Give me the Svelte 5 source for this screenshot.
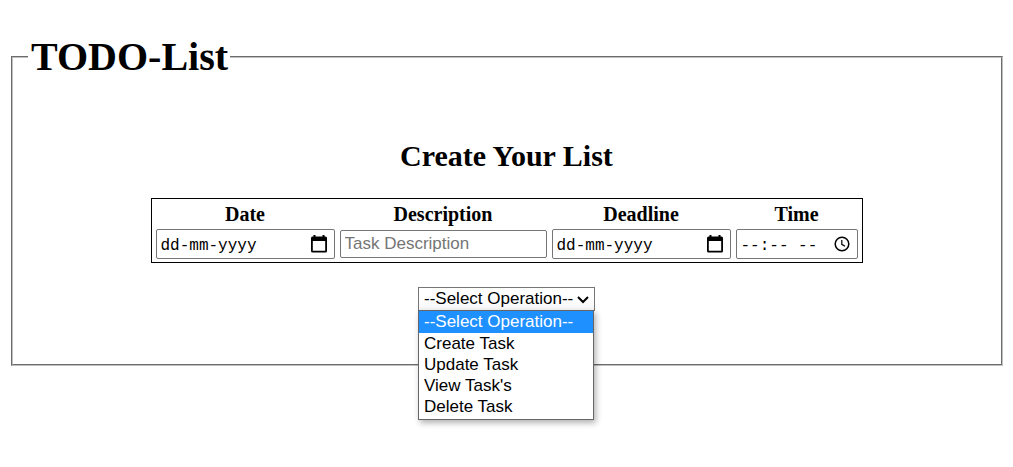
<script>
  const operations = ['--Select Operation--', 'Create Task', 'Update Task', "View Task's", 'Delete Task'];
  let operation = $state(operations[0]);
  let open = $state(true);

  function choose(name) {
    operation = name;
    open = false;
  }
</script>

{#snippet calendar()}
  <svg width="16" height="18" viewBox="0 0 16 18" aria-hidden="true">
    <path fill="#000" fill-rule="evenodd" d="M2.500 0h2v1.500h7V0h2v1.500h1a1.500 1.500 0 0 1 1.500 1.500v13a1.500 1.500 0 0 1-1.500 1.500h-13A1.500 1.500 0 0 1 0 16v-13A1.500 1.500 0 0 1 1.500 1.500h1zM1.800 6V15.700h12.400V6z" />
  </svg>
{/snippet}

<main>
  <fieldset class="todo">
    <legend><h1>TODO-List</h1></legend>
    <h2>Create Your List</h2>
    <table>
      <thead>
        <tr>
          <th id="date">Date</th>
          <th id="description">Description</th>
          <th id="deadline">Deadline</th>
          <th id="time">Time</th>
        </tr>
      </thead>
      <tbody>
        <tr>
          <td>
            <div class="field date">
              <input type="text" aria-labelledby="date" placeholder="dd-mm-yyyy" />
              <button type="button" aria-labelledby="date">{@render calendar()}</button>
            </div>
          </td>
          <td>
            <div class="field task">
              <input type="text" aria-labelledby="description" placeholder="Task Description" />
            </div>
          </td>
          <td>
            <div class="field date">
              <input type="text" aria-labelledby="deadline" placeholder="dd-mm-yyyy" />
              <button type="button" aria-labelledby="deadline">{@render calendar()}</button>
            </div>
          </td>
          <td>
            <div class="field time">
              <input type="text" aria-labelledby="time" placeholder="--:-- --" />
              <button type="button" aria-labelledby="time">
                <svg width="16" height="16" viewBox="0 0 16 16" fill="none" stroke="#000" aria-hidden="true">
                  <circle cx="8" cy="8" r="6.800" stroke-width="1.500" />
                  <path d="M7.800 4v4.300l3.200 2" stroke-width="1.200" />
                </svg>
              </button>
            </div>
          </td>
        </tr>
      </tbody>
    </table>

    <div class="operation">
      <select aria-label="Operation" bind:value={operation}>
        {#each operations as name}
          <option value={name}>{name}</option>
        {/each}
      </select>
      <svg class="chevron" width="12" height="8" viewBox="0 0 12 8" fill="none" stroke="#000" stroke-width="2" aria-hidden="true">
        <path d="M1 1l5 5 5-5" />
      </svg>
      {#if open}
        <ul>
          {#each operations as name}
            <li>
              <button type="button" class:active={name === operation} onclick={() => choose(name)}>{name}</button>
            </li>
          {/each}
        </ul>
      {/if}
    </div>
  </fieldset>
</main>

<style>
  :global(body) {
    background: #fff;
  }
  main {
    box-sizing: border-box;
    min-height: 100vh;
    padding: 34px 10px 10px 11px;
    font-family: "Liberation Serif", "Times New Roman", serif;
    font-size: 20px;
    color: #000;
  }
  .todo {
    display: flex;
    flex-direction: column;
    align-items: center;
    min-width: 0;
    margin: 0;
    padding: 59px 16px 53px 15px;
    border: 2px groove #c0c0c0;
  }
  legend {
    padding: 0 2px 0 3px;
  }
  h1 {
    margin: 0;
    font-size: 40px;
    line-height: 46px;
  }
  h2 {
    margin: 0 0 25px;
    font-size: 30px;
    line-height: 34px;
  }
  table {
    border: 1px solid #000;
    border-spacing: 3px;
  }
  th {
    padding: 0;
    line-height: 24px;
  }
  td {
    padding: 0 1px;
  }
  .field {
    display: flex;
    align-items: center;
    box-sizing: border-box;
    height: 30px;
    padding: 0 7px 0 4px;
    border: 1px solid #767676;
    border-radius: 2px;
  }
  .field input {
    flex: 1;
    min-width: 0;
    padding: 3px 0 0;
    border: 0;
    outline: 0;
    background: none;
    font: 16px "Liberation Mono", monospace;
  }
  .field input::placeholder {
    color: #000;
    opacity: 1;
  }
  .field button {
    display: flex;
    padding: 0;
    border: 0;
    background: none;
  }
  .date {
    width: 179px;
  }
  .task {
    width: 207px;
    height: 28px;
  }
  .task input {
    padding: 0;
    font: 17px "Liberation Sans", Arial, sans-serif;
  }
  .task input::placeholder {
    color: #757575;
  }
  .time {
    width: 122px;
  }
  .operation {
    position: relative;
    width: 177px;
    margin-top: 24px;
    font: 17px "Liberation Sans", Arial, sans-serif;
  }
  select {
    display: block;
    appearance: none;
    box-sizing: border-box;
    width: 100%;
    height: 24px;
    padding: 0 0 1px 5px;
    border: 1px solid #767676;
    border-radius: 0;
    background: linear-gradient(#fff 40%, #f6f6f6);
    font: inherit;
    color: #000;
  }
  .chevron {
    position: absolute;
    top: 9px;
    right: 6px;
    pointer-events: none;
  }
  ul {
    position: absolute;
    top: 100%;
    left: 0;
    right: 1px;
    margin: -1px 0 0;
    padding: 0 0 2px;
    border: 1px solid #666;
    background: #fff;
    box-shadow: 2px 3px 6px rgba(0, 0, 0, 0.3);
    list-style: none;
  }
  li button {
    display: block;
    width: 100%;
    padding: 0 0 0 5px;
    border: 0;
    background: none;
    font: inherit;
    line-height: 21px;
    color: #000;
    text-align: left;
    white-space: nowrap;
  }
  li .active {
    line-height: 22px;
    background: #1e90ff;
    color: #fff;
  }
</style>
